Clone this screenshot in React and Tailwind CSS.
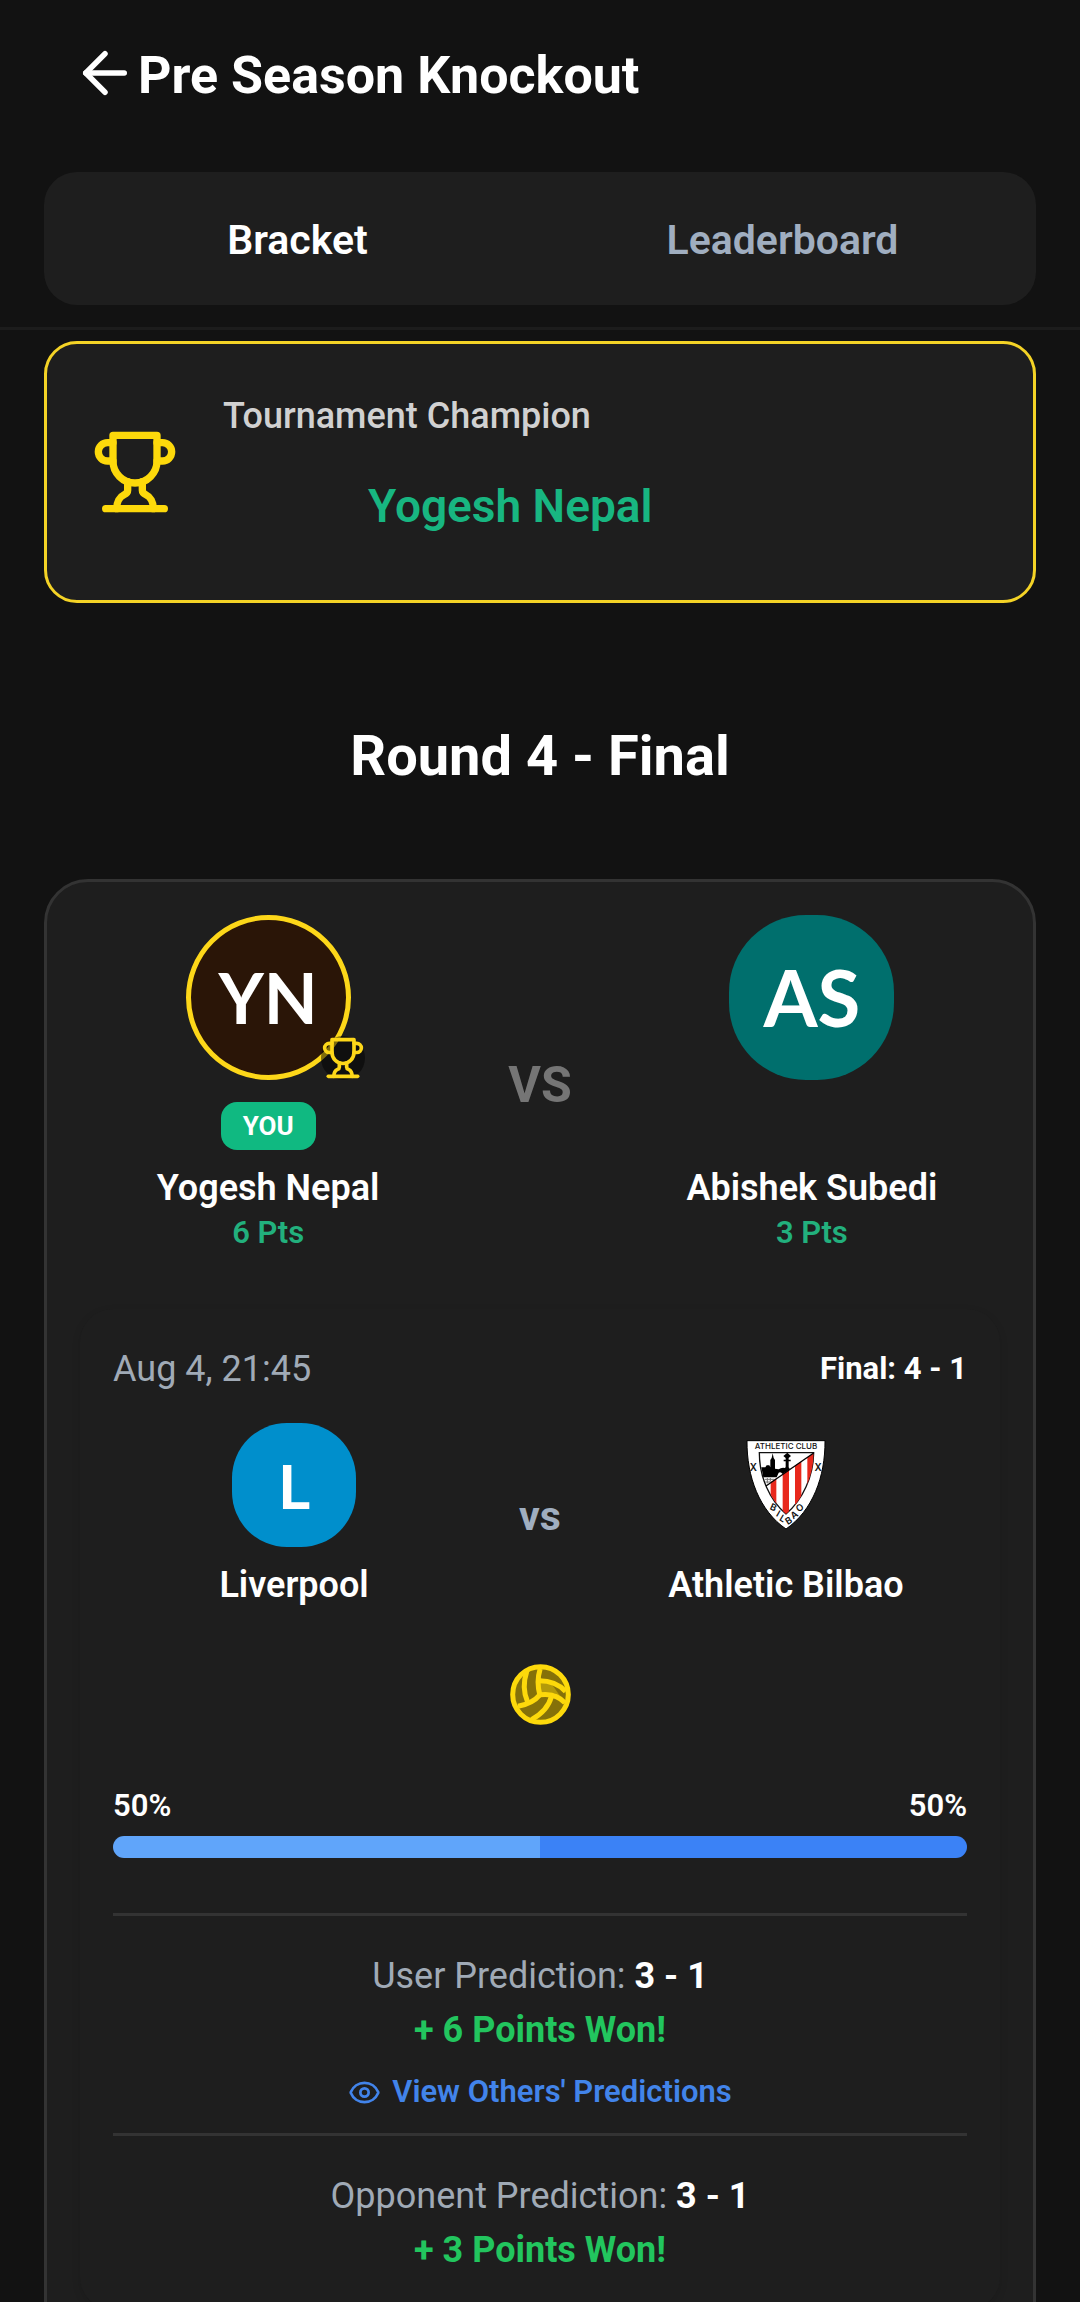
import React, { useState } from 'react';
import { ArrowLeft, Eye } from 'lucide-react';

const TrophyIcon = ({ className }) => (
  <svg
    viewBox="0 0 24 24"
    fill="none"
    stroke="currentColor"
    strokeWidth="2"
    strokeLinecap="round"
    strokeLinejoin="round"
    className={className}
    aria-hidden="true"
  >
    <path d="M6 9H4.5a2.5 2.5 0 0 1 0-5H6" />
    <path d="M18 9h1.5a2.5 2.5 0 0 0 0-5H18" />
    <path d="M4 22h16" />
    <path d="M10 14.66V17c0 .55-.47.98-.97 1.21C7.85 18.75 7 20.24 7 22" />
    <path d="M14 14.66V17c0 .55.47.98.97 1.21C16.15 18.75 17 20.24 17 22" />
    <path d="M18 2H6v7a6 6 0 0 0 12 0V2Z" />
  </svg>
);

const BallIcon = ({ className }) => (
  <svg viewBox="0 0 182 182" className={className} aria-hidden="true">
    <circle cx="91" cy="91" r="83" fill="#857109" />
    <path d="M89 40C100 50 130 48 160 76L165 106C140 84 112 82 90 88Z" fill="#b39a0a" />
    <path d="M100 20L160 60L160 78L112 50Z" fill="#857109" />
    <path d="M126 62L166 80L166 112L144 88Z" fill="#857109" />
    <g fill="none" stroke="#fdd90b" strokeWidth="15">
      <circle cx="91" cy="91" r="83" />
      <path d="M89 92C82 66 82 40 90 14" />
      <path d="M52 112C40 84 40 52 50 22" />
      <path d="M89 92C76 108 56 120 24 126" />
      <path d="M87 50C118 50 146 60 166 82" />
      <path d="M89 92C118 88 146 96 164 116" />
      <path d="M124 96C116 126 98 148 64 166" />
    </g>
  </svg>
);

const BilbaoCrest = ({ className }) => (
  <svg viewBox="0 0 240 270" className={className} role="img" aria-label="Athletic Bilbao crest">
    <defs>
      <clipPath id="crest-stripes">
        <path d="M60 136L203 39C202 110 170 180 120 222C94 200 72 166 60 136Z" />
      </clipPath>
    </defs>
    <path d="M3 2H237C238 110 200 212 120 267C40 212 2 110 3 2Z" fill="#fff" stroke="#000" strokeWidth="3" />
    <path d="M40 38H203C202 110 170 180 120 222C70 180 40 110 40 38Z" fill="#fff" stroke="#111" strokeWidth="4" />
    <g clipPath="url(#crest-stripes)" fill="#e8281c">
      <path d="M74 40H91V230H74Z" />
      <path d="M110 40H129V230H110Z" />
      <path d="M147 40H166V230H147Z" />
      <path d="M184 40H206V230H184Z" />
    </g>
    {/* skyline and bridge */}
    <path
      d="M46 82H58L62 76H70L73 82V60L77 54L80 40L83 54L87 60V86L98 88Q106 82 116 84L119 82V64H113V59H119V54L112 48L124 38L135 48L128 54V59H134V64H128V82L132 88L110 102Q104 94 98 98L92 112H52Z"
      fill="#000"
    />
    <path d="M56 118H84M58 126H74M64 114V130M73 114V124" fill="none" stroke="#777" strokeWidth="3" />
    <path d="M60 138L203 39" fill="none" stroke="#000" strokeWidth="4" />
    <g fill="#111" fontFamily="Inter, sans-serif" textAnchor="middle">
      <text x="120" y="27" fontSize="24" fontWeight="500">ATHLETIC CLUB</text>
      <text x="22" y="93" fontSize="30" fontWeight="600">X</text>
      <text x="216" y="93" fontSize="30" fontWeight="600">X</text>
      <g fontSize="28" fontWeight="600">
        <text transform="translate(78 211) rotate(24)">B</text>
        <text transform="translate(92 229) rotate(30)">I</text>
        <text transform="translate(105 244) rotate(30)">L</text>
        <text transform="translate(133 250) rotate(-32)">B</text>
        <text transform="translate(150 233) rotate(-34)">A</text>
        <text transform="translate(167 211) rotate(-36)">O</text>
      </g>
    </g>
  </svg>
);

const PlayerAvatar = ({ player }) => (
  <div className="relative">
    {player.champion ? (
      <div className="flex size-[165px] items-center justify-center rounded-full border-[5px] border-[#fdd719] bg-[#2a1507] font-[Lato,sans-serif] text-[70px] font-bold text-white">
        {player.initials}
      </div>
    ) : (
      <div className="flex size-[165px] items-center justify-center rounded-[77px] bg-[#006f6d] font-[Lato,sans-serif] text-[78px] font-bold text-white">
        {player.initials}
      </div>
    )}
    {player.champion && (
      <span className="absolute -right-[14px] bottom-0 rounded-full bg-black/50">
        <TrophyIcon className="size-11 text-[#fdd719]" />
      </span>
    )}
  </div>
);

const Player = ({ player }) => (
  <div className="flex flex-1 flex-col items-center">
    <PlayerAvatar player={player} />
    <div className="mt-[22px] h-12">
      {player.isYou && (
        <span className="block rounded-2xl bg-[#10b981] px-[22px] text-[26px] leading-[48px] font-bold text-white">YOU</span>
      )}
    </div>
    <p className="mt-[14px] text-[36px] leading-[48px] font-semibold text-white">{player.name}</p>
    <p className="text-[31px] leading-[42px] font-semibold text-[#22b07d]">{player.points} Pts</p>
  </div>
);

const Team = ({ name, children }) => (
  <div className="flex flex-1 flex-col items-center">
    <div className="flex size-[124px] items-center justify-center">{children}</div>
    <p className="mt-[14px] text-[36px] leading-[48px] font-semibold text-white">{name}</p>
  </div>
);

const Prediction = ({ label, score, points, children }) => (
  <div className="border-t-[3px] border-[#333333] pt-[33px] text-center">
    <p className="text-[36px] leading-[54px] text-[#a0aab6]">
      {label}: <span className="font-bold text-white">{score}</span>
    </p>
    <p className="text-[36px] leading-[54px] font-bold text-[#22c55e]">+ {points} Points Won!</p>
    {children}
  </div>
);

const players = [
  { initials: 'YN', name: 'Yogesh Nepal', points: 6, isYou: true, champion: true },
  { initials: 'AS', name: 'Abishek Subedi', points: 3 },
];

const split = { home: 50, away: 50 };

export default function App() {
  const [tab, setTab] = useState('Bracket');

  return (
    <div className="flex h-screen flex-col overflow-hidden bg-[#121212] font-[Roboto,sans-serif]">
      {/* Header */}
      <header className="flex items-start px-[72px] pt-10 pb-[38px]">
        <button type="button" aria-label="Back" className="text-white">
          <ArrowLeft className="size-[66px]" />
        </button>
        <h1 className="text-[52px] leading-[72px] font-bold text-white">Pre Season Knockout</h1>
      </header>

      {/* Tabs */}
      <div className="border-b-[3px] border-[#1c1c1c] px-11 py-[22px]">
        <div className="flex rounded-[33px] bg-[#1e1e1e] px-[11px]">
          {['Bracket', 'Leaderboard'].map((name) => (
            <button
              key={name}
              type="button"
              onClick={() => setTab(name)}
              className={`flex-1 pt-[38px] pb-[34px] text-[41px] leading-[61px] font-semibold ${tab === name ? 'text-white' : 'text-[#a0aec0]'}`}
            >
              {name}
            </button>
          ))}
        </div>
      </div>

      <main className="flex-1 overflow-y-auto px-11 pt-[11px] [scrollbar-width:none]">
        {/* Champion */}
        <section className="flex items-center gap-11 rounded-[33px] border-[3px] border-[#f4d326] bg-[#1e1e1e] px-11 py-[46px]">
          <TrophyIcon className="size-[88px] text-[#fdd90b]" />
          <div className="flex-1 pt-0.5 pb-[18px]">
            <div className="w-3/4">
              <p className="text-[36px] leading-[48px] font-medium text-[#d1d1d1]">Tournament Champion</p>
              <p className="mt-9 text-center text-[46px] leading-[60px] font-semibold text-[#18b681]">Yogesh Nepal</p>
            </div>
          </div>
        </section>

        <h2 className="mt-[117px] text-center text-[56px] leading-[72px] font-bold text-white">Round 4 - Final</h2>

        {/* Match up */}
        <section className="mt-[87px] rounded-[44px] border-[3px] border-[#333333] bg-[#1e1e1e] p-[33px]">
          <div className="flex items-center">
            <Player player={players[0]} />
            <span className="px-[52px] text-[50px] leading-[60px] font-bold text-[#757575]">VS</span>
            <Player player={players[1]} />
          </div>

          <article className="mt-[55px] rounded-[33px] bg-[#1e1e1e] p-[33px] shadow-[0_3px_8px_rgba(0,0,0,0.12)]">
            <div className="flex justify-between leading-[54px]">
              <time className="text-[36px] text-[#a0aab6]">Aug 4, 21:45</time>
              <span className="text-[31px] font-bold text-white">Final: 4 - 1</span>
            </div>

            <div className="mt-[27px] flex items-center">
              <Team name="Liverpool">
                <span className="flex size-[124px] items-center justify-center rounded-[55px] bg-[#008fcc] font-[Lato,sans-serif] text-[62px] font-bold text-white">
                  L
                </span>
              </Team>
              <span className="px-11 text-[41px] leading-[60px] font-bold text-[#a0aec0]">vs</span>
              <Team name="Athletic Bilbao">
                <BilbaoCrest className="h-[90px] w-20" />
              </Team>
            </div>

            <div className="mt-[55px] flex justify-center">
              <BallIcon className="size-[61px]" />
            </div>

            {/* Vote split */}
            <div className="mt-[61px] flex justify-between text-[31px] leading-[40px] font-semibold text-white">
              <span>{split.home}%</span>
              <span>{split.away}%</span>
            </div>
            <div className="mt-[10px] mb-[55px] flex h-[22px] overflow-hidden rounded-full">
              <div className="bg-[#60a5fa]" style={{ width: `${split.home}%` }} />
              <div className="bg-[#3b82f6]" style={{ width: `${split.away}%` }} />
            </div>

            <Prediction label="User Prediction" score="3 - 1" points={6}>
              <button
                type="button"
                className="mt-[14px] mb-5 inline-flex items-center gap-[11px] text-[31px] leading-[42px] font-semibold text-[#4284ea]"
              >
                <Eye className="size-[33px]" />
                View Others' Predictions
              </button>
            </Prediction>
            <Prediction label="Opponent Prediction" score="3 - 1" points={3} />
          </article>
        </section>
      </main>
    </div>
  );
}
